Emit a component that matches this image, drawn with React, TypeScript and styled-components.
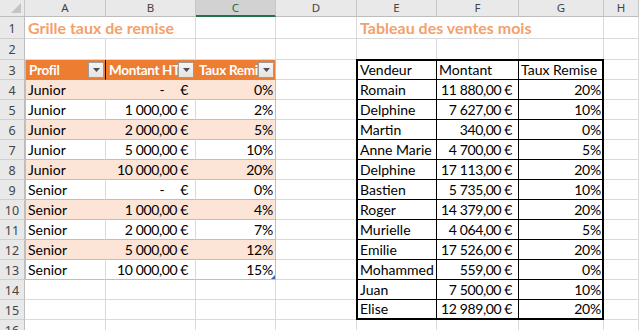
import React from "react";
import styled, { createGlobalStyle, css } from "styled-components";

const GlobalStyle = createGlobalStyle`
  html, body { margin: 0; padding: 0; background: #fff; overflow: hidden; }
  #root { width: 639px; height: 330px; overflow: hidden; }
`;

const COLS = ["A", "B", "C", "D", "E", "F", "G", "H"];
const ROWS = 16;

const GRID = "#dadada";
const ORANGE = "#ed7d31";
const ORANGE_LINE = "#f4b084";
const ORANGE_BAND = "#fce4d6";

const euro = (n: number) => {
  const [int, dec] = n.toFixed(2).split(".");
  return int.replace(/\B(?=(\d{3})+(?!\d))/g, "\u00a0") + "," + dec + "\u00a0€";
};

const grille: [string, number, number][] = [
  ["Junior", 0, 0],
  ["Junior", 1000, 2],
  ["Junior", 2000, 5],
  ["Junior", 5000, 10],
  ["Junior", 10000, 20],
  ["Senior", 0, 0],
  ["Senior", 1000, 4],
  ["Senior", 2000, 7],
  ["Senior", 5000, 12],
  ["Senior", 10000, 15],
];

const ventes: [string, number, number][] = [
  ["Romain", 11880, 20],
  ["Delphine", 7627, 10],
  ["Martin", 340, 0],
  ["Anne Marie", 4700, 5],
  ["Delphine", 17113, 20],
  ["Bastien", 5735, 10],
  ["Roger", 14379, 20],
  ["Murielle", 4064, 5],
  ["Emilie", 17526, 20],
  ["Mohammed", 559, 0],
  ["Juan", 7500, 10],
  ["Elise", 12989, 20],
];

const Sheet = styled.div`
  display: grid;
  grid-template-columns: 25px 81px 90px 80px 81px 80px 82px 85px 1fr;
  grid-template-rows: 17px 22px 21px repeat(14, 20px);
  width: 639px;
  height: 330px;
  overflow: hidden;
  font-family: Lato, "Liberation Sans", sans-serif;
  font-size: 14px;
  color: #000;
  background: #fff;
`;

const Corner = styled.div`
  grid-row: 1;
  grid-column: 1;
  background: #e9e9e9;
  border-right: 1px solid #c6c6c6;
  border-bottom: 1px solid #bdbdbd;
  display: flex;
  align-items: flex-end;
  justify-content: flex-end;
  padding: 0 3px 3px 0;
  box-sizing: border-box;
`;

const ColHead = styled.div<{ $col: number; $selected?: boolean }>`
  grid-row: 1;
  grid-column: ${(p) => p.$col};
  box-sizing: border-box;
  background: ${(p) => (p.$selected ? "#d2d2d2" : "#e9e9e9")};
  border-right: 1px solid #c6c6c6;
  border-bottom: ${(p) => (p.$selected ? "2px solid #217346" : "1px solid #bdbdbd")};
  color: ${(p) => (p.$selected ? "#1e6b41" : "#444")};
  font-family: "Noto Sans", sans-serif;
  font-size: 11.5px;
  line-height: 16px;
  text-align: center;
`;

const RowHead = styled.div<{ $row: number }>`
  grid-row: ${(p) => p.$row};
  grid-column: 1;
  box-sizing: border-box;
  background: #e9e9e9;
  border-right: 1px solid #bdbdbd;
  border-bottom: 1px solid #cfcfcf;
  color: #444;
  font-family: "Noto Sans", sans-serif;
  font-size: 12.5px;
  display: flex;
  align-items: center;
  justify-content: center;
  padding-top: 1px;
`;

const Cell = styled.div<{ $row: number; $col: number }>`
  grid-row: ${(p) => p.$row};
  grid-column: ${(p) => p.$col};
  border-right: 1px solid ${GRID};
  border-bottom: 1px solid ${GRID};
`;

const Title = styled.div<{ $col: number; $span: number }>`
  grid-row: 2;
  grid-column: ${(p) => p.$col} / span ${(p) => p.$span};
  background: #fff;
  border-right: 1px solid ${GRID};
  border-bottom: 1px solid ${GRID};
  color: #f5a06b;
  font-weight: 700;
  font-size: 16px;
  line-height: 22px;
  padding-left: 3px;
  white-space: nowrap;
`;

const Grille = styled.div`
  grid-row: 4 / span 11;
  grid-column: 2 / span 3;
  display: grid;
  grid-template-columns: subgrid;
  grid-template-rows: subgrid;
`;

type Band = "head" | "even" | "odd";

const GCell = styled.div<{ $band: Band; $first?: boolean; $last?: boolean; $right?: boolean; $cursor?: boolean }>`
  position: relative;
  display: flex;
  align-items: center;
  justify-content: ${(p) => (p.$right ? "flex-end" : "flex-start")};
  white-space: nowrap;
  overflow: hidden;
  line-height: 20px;
  border-bottom: 1px solid ${ORANGE_LINE};
  border-left: ${(p) => (p.$first ? `1px solid ${ORANGE_LINE}` : "none")};
  border-right: 1px solid
    ${(p) => (p.$last ? ORANGE_LINE : p.$band === "odd" ? GRID : "transparent")};
  background: ${(p) => (p.$band === "head" ? ORANGE : p.$band === "even" ? ORANGE_BAND : "#fff")};
  padding: 0 2px;
  ${(p) =>
    p.$band === "head" &&
    css`
      color: #fff;
      font-weight: 700;
      font-size: 13.5px;
      letter-spacing: -0.3px;
      padding: 0 1px 0 3px;
      border-bottom-color: ${ORANGE};
    `}
  ${(p) =>
    p.$cursor &&
    css`
      border-right: 1px solid #000;
    `}
`;

const HeadText = styled.span`
  flex: 1;
  overflow: hidden;
  white-space: nowrap;
`;

const Filter = styled.span`
  flex: none;
  box-sizing: border-box;
  width: 16px;
  height: 16px;
  background: linear-gradient(#f4f4f4, #e4e4e4);
  border: 1px solid #9c9c9c;
  display: flex;
  align-items: center;
  justify-content: center;
`;

const Money = styled.span<{ $pad: number }>`
  padding-right: ${(p) => p.$pad}px;
  letter-spacing: -0.4px;
`;

const Dash = styled.span`
  padding-right: 16px;
`;

const Pct = styled.span`
  letter-spacing: -0.2px;
`;

const Handle = styled.span`
  position: absolute;
  right: 0;
  bottom: 0;
  width: 0;
  height: 0;
  border-left: 4px solid transparent;
  border-bottom: 4px solid #3f5fb0;
`;

const Ventes = styled.div`
  grid-row: 4 / span 13;
  grid-column: 6 / span 3;
  display: grid;
  grid-template-columns: subgrid;
  grid-template-rows: subgrid;
  border: 2px solid #000;
  margin: -1px 0 0 -1px;
  background: #fff;
`;

const VCell = styled.div<{ $lastCol?: boolean; $lastRow?: boolean; $right?: boolean }>`
  display: flex;
  align-items: center;
  justify-content: ${(p) => (p.$right ? "flex-end" : "flex-start")};
  white-space: nowrap;
  line-height: 20px;
  padding: 0 1px 0 2px;
  border-right: ${(p) => (p.$lastCol ? "none" : "1px solid #000")};
  border-bottom: ${(p) => (p.$lastRow ? "none" : "1px solid #000")};
`;

const FilterButton = () => (
  <Filter>
    <svg width="7" height="4" viewBox="0 0 7 4">
      <path d="M0 0h7L3.5 4z" fill="#505050" />
    </svg>
  </Filter>
);

const Amount = ({ value, pad }: { value: number; pad: number }) =>
  value === 0 ? (
    <Money $pad={pad}>
      <Dash>-</Dash>€
    </Money>
  ) : (
    <Money $pad={pad}>{euro(value)}</Money>
  );

export default function App() {
  const background: React.ReactNode[] = [];
  for (let r = 1; r <= ROWS; r++) {
    for (let c = 1; c <= COLS.length; c++) {
      background.push(<Cell key={`${r}-${c}`} $row={r + 1} $col={c + 1} />);
    }
  }

  return (
    <>
      <GlobalStyle />
      <Sheet>
        <Corner>
          <svg width="10" height="10" viewBox="0 0 10 10">
            <path d="M10 0v10H0z" fill="#c4c4c4" />
          </svg>
        </Corner>
        {COLS.map((c, i) => (
          <ColHead key={c} $col={i + 2} $selected={c === "C"}>
            {c}
          </ColHead>
        ))}
        {Array.from({ length: ROWS }, (_, i) => (
          <RowHead key={i} $row={i + 2}>
            {i + 1}
          </RowHead>
        ))}

        {background}

        <Title $col={2} $span={2}>Grille taux de remise</Title>
        <Title $col={6} $span={3}>Tableau des ventes mois</Title>

        <Grille>
          <GCell $band="head" $first $cursor>
            <HeadText>Profil</HeadText>
            <FilterButton />
          </GCell>
          <GCell $band="head">
            <HeadText>Montant HT</HeadText>
            <FilterButton />
          </GCell>
          <GCell $band="head" $last>
            <HeadText>Taux Remise</HeadText>
            <FilterButton />
          </GCell>
          {grille.map(([profil, montant, taux], i) => {
            const band: Band = i % 2 === 0 ? "even" : "odd";
            const isLast = i === grille.length - 1;
            return (
              <React.Fragment key={i}>
                <GCell $band={band} $first>
                  {profil}
                </GCell>
                <GCell $band={band} $right>
                  <Amount value={montant} pad={5} />
                </GCell>
                <GCell $band={band} $last $right>
                  <Pct>{taux}%</Pct>
                  {isLast && <Handle />}
                </GCell>
              </React.Fragment>
            );
          })}
        </Grille>

        <Ventes>
          <VCell>Vendeur</VCell>
          <VCell>Montant</VCell>
          <VCell $lastCol>Taux Remise</VCell>
          {ventes.map(([nom, montant, taux], i) => {
            const lastRow = i === ventes.length - 1;
            return (
              <React.Fragment key={i}>
                <VCell $lastRow={lastRow}>{nom}</VCell>
                <VCell $lastRow={lastRow} $right>
                  <Amount value={montant} pad={5} />
                </VCell>
                <VCell $lastRow={lastRow} $lastCol $right>
                  <Pct>{taux}%</Pct>
                </VCell>
              </React.Fragment>
            );
          })}
        </Ventes>
      </Sheet>
    </>
  );
}
